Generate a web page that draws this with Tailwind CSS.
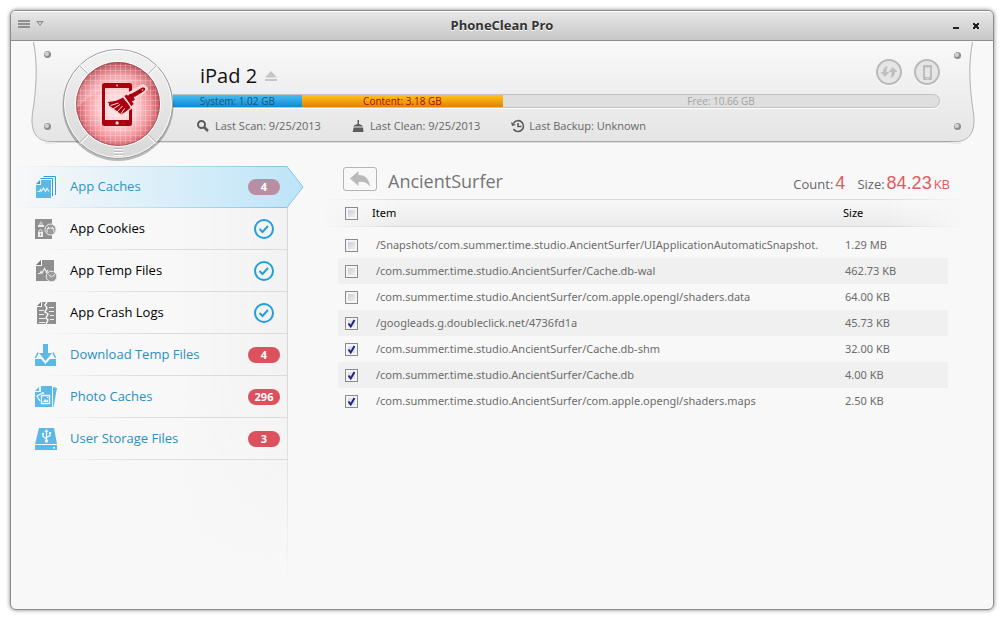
<!DOCTYPE html>
<html lang="en">
<head>
<meta charset="utf-8">
<meta name="viewport" content="width=device-width, initial-scale=1">
<title>PhoneClean Pro</title>
<script src="https://cdn.jsdelivr.net/npm/@tailwindcss/browser@4"></script>
</head>
<body class="flex min-h-screen flex-col bg-white p-2.5 font-['Open_Sans','Noto_Sans',sans-serif] text-xs text-[#666]">
<div class="flex flex-1 flex-col overflow-hidden rounded-md border border-[#8c8c8c] bg-[#f8f8f8] shadow-[0_0_4px_rgba(0,0,0,0.5)]">

  <!-- Title bar -->
  <header class="grid h-[30px] shrink-0 grid-cols-[1fr_auto_1fr] items-center border-b border-[#8f8f8f] bg-linear-to-b from-[#e8e8e8] to-[#c8c8c8] px-1.5 shadow-[inset_0_1px_0_white]">
    <button aria-label="Menu" class="flex items-center gap-1.5 pb-1 pl-px">
      <svg class="h-2 w-3" viewBox="0 0 12 8" fill="#8f8f8f"><path d="M0 0h12v2H0zM0 3h12v2H0zM0 6h12v2H0z"/></svg>
      <svg class="h-[5px] w-2" viewBox="0 0 8 5" fill="#c8c8c8" stroke="#8a8a8a"><path d="M.8.5h6.4L4 4.3z"/></svg>
    </button>
    <h1 class="text-[13px] font-bold text-[#333] [text-shadow:0_1px_0_white]">PhoneClean Pro</h1>
    <div class="flex items-center justify-end gap-3.5 pr-2">
      <button aria-label="Minimize"><svg class="h-1.5 w-1.5" viewBox="0 0 6 6" fill="#222"><path d="M0 4h6v2H0z"/></svg></button>
      <button aria-label="Close"><svg class="h-1.5 w-1.5" viewBox="0 0 6 6" fill="#222"><path d="M0 0h2v1h2V0h2v2H5v2h1v2H4V5H2v1H0V4h1V2H0z"/></svg></button>
    </div>
  </header>

  <!-- Device panel -->
  <section class="relative flex pt-[7px] pr-[53px] pl-[51px]">
    <div class="absolute top-0 right-[18px] left-5 flex h-[103px]">
      <svg class="h-[103px] w-6 shrink-0" viewBox="0 0 24 103">
        <defs><linearGradient id="metal" gradientUnits="userSpaceOnUse" x1="0" y1="0" x2="0" y2="101"><stop offset="0" stop-color="#f9f9f9"/><stop offset="1" stop-color="#e5e5e5"/></linearGradient></defs>
        <path d="M2 0C7 25 4 55 1.500 72C-2 91 6 100.500 19 100.500H24V0z" fill="url(#metal)"/>
        <path d="M2.500 1C7.500 25 4.500 55 1.500 72C-1 91 6 100.500 19 100.500H24" fill="none" stroke="#b0b0ac"/>
        <path d="M14 102h10" stroke="#dedede"/>
        <circle cx="16.500" cy="13.500" r="3.500" fill="#8d8d8d"/><circle cx="15.700" cy="12.700" r="2.300" fill="#d0d0d0"/>
        <circle cx="16.500" cy="85.500" r="3.500" fill="#8d8d8d"/><circle cx="15.700" cy="84.700" r="2.300" fill="#d0d0d0"/>
      </svg>
      <div class="mb-0.5 flex-1 border-b border-[#a9a9a5] bg-linear-to-b from-[#f9f9f9] to-[#e5e5e5] shadow-[0_1px_0_#dedede]"></div>
      <svg class="h-[103px] w-6 shrink-0" viewBox="0 0 24 103">
        <path d="M22 0C17 25 20 55 22.500 72C26 91 18 100.500 5 100.500H0V0z" fill="url(#metal)"/>
        <path d="M21.500 1C16.500 25 19.500 55 22.500 72C25 91 18 100.500 5 100.500H0" fill="none" stroke="#b0b0ac"/>
        <path d="M0 102h10" stroke="#dedede"/>
        <circle cx="6.500" cy="14.500" r="3.500" fill="#8d8d8d"/><circle cx="5.700" cy="13.700" r="2.300" fill="#d0d0d0"/>
        <circle cx="6.500" cy="85.500" r="3.500" fill="#8d8d8d"/><circle cx="5.700" cy="84.700" r="2.300" fill="#d0d0d0"/>
      </svg>
    </div>

    <!-- Dial -->
    <svg class="relative z-10 h-[114px] w-[114px] shrink-0" viewBox="0 0 114 114">
      <defs>
        <linearGradient id="ring" x1="0" y1="0" x2="0" y2="1"><stop offset="0" stop-color="#f2f2f2"/><stop offset="1" stop-color="#d8d8d8"/></linearGradient>
        <radialGradient id="glow" cx=".5" cy=".54" r=".54"><stop offset="0" stop-color="#fff0f0"/><stop offset=".45" stop-color="#fcc8cb"/><stop offset=".7" stop-color="#f2949b"/><stop offset=".9" stop-color="#cc5a64"/><stop offset="1" stop-color="#a83640"/></radialGradient>
        <linearGradient id="gloss" x1="0" y1="0" x2="0" y2="1"><stop offset="0" stop-color="#fff" stop-opacity=".1"/><stop offset="1" stop-color="#fff" stop-opacity=".3"/></linearGradient>
        <pattern id="grid" width="5" height="5" patternUnits="userSpaceOnUse" x="3" y="2"><path d="M0 .5h5M.5 0v5" stroke="#fff" stroke-opacity=".22"/></pattern>
        <clipPath id="lens"><circle cx="56" cy="56" r="42"/></clipPath>
      </defs>
      <circle cx="56" cy="57.500" r="55.500" fill="#000" fill-opacity=".25"/>
      <circle cx="56" cy="56" r="54.500" fill="url(#ring)" stroke="#999"/>
      <circle cx="56" cy="56" r="53.500" fill="none" stroke="#fff" stroke-opacity=".8"/>
      <path d="M17.500 17.500l9 9M94.500 17.500l-9 9M17.500 94.500l9-9M94.500 94.500l-9-9" stroke="#bcbcbc"/>
      <path d="M18.500 16.500l9 9M95.500 18.500l-9 9M18.500 95.500l9-9M93.500 95.500l-9-9" stroke="#fff"/>
      <circle cx="56" cy="56" r="43" fill="#fff"/>
      <circle cx="56" cy="56" r="42" fill="url(#glow)"/>
      <g clip-path="url(#lens)">
        <path d="M14 14h84v26C75 30 40 32 14 62z" fill="url(#gloss)"/>
        <rect x="14" y="14" width="84" height="84" fill="url(#grid)"/>
      </g>
      <circle cx="56" cy="56" r="41.500" fill="none" stroke="#9d4a50" stroke-opacity=".7"/>
      <path fill="#a8000f" fill-rule="evenodd" d="M42.500 35h25q2.500 0 2.500 2.500v38q0 2.500-2.500 2.500h-25q-2.500 0-2.500-2.500v-38q0-2.500 2.500-2.500zM43 40v32h24V40zM54.200 37.500a.9.900 0 1 0 1.800 0a.9.900 0 1 0-1.800 0M53.400 75a1.700 1.700 0 1 0 3.400 0a1.700 1.700 0 1 0-3.400 0"/>
      <!-- Brush -->
      <g fill="#a8000f">
        <path d="M62 48l7.500 11.500q-4.500 4-10.500 7.500l-13-9V53.500Q56 53 62 48z" stroke="#fbd9da" stroke-width="2"/>
        <path d="M60.500 49L71.500 43l9.500-5.500 3.500 3-3.500 4-7.500 4.500-3 7z" stroke="#fbd9da" stroke-width="3" stroke-linejoin="round"/>
        <path d="M61 49.500l7.500 10.500q-5 4-9.500 6.500L45.500 54Q55 53.500 61 49.500z"/>
        <path d="M48.500 57.500l8-2.500M51 61l7-4.500M54.500 64.500l6-6.500M58.500 66.500l4-6" fill="none" stroke="#fbd9da"/>
        <path d="M62.500 48l2.300-1.600 7 9.500-2.500 2zM66.500 47l2.500-1.500 4 6-2.300 1.700zM70.500 46l9.500-6q2.200-1 3 .3t-.8 2.700l-9.500 6z"/>
        <circle cx="80.500" cy="42" r=".8" fill="#fbd9da"/>
      </g>
      <path d="M52 100.500h9M52 103.500h9M52 106.500h9" stroke="#bdbdbd"/><path d="M52 101.500h9M52 104.500h9M52 107.500h9" stroke="#fff"/>
    </svg>

    <div class="relative -ml-[3px] min-w-0 flex-1">
      <div class="flex h-[46px] items-center justify-between pl-[27px]">
        <div class="flex items-center gap-2 pt-2.5">
          <h2 class="text-xl leading-6 text-[#111]">iPad 2</h2>
          <button aria-label="Eject"><svg class="h-2.5 w-3" viewBox="0 0 12 10" fill="#c6c6c6"><path d="M6 0l6 6.500H0zM0 8h12v2H0z"/></svg></button>
        </div>
        <div class="flex gap-3 pt-0.5">
          <button aria-label="Refresh" class="grid size-[26px] place-items-center rounded-full border-2 border-[#b9b9b9] bg-[#e6e6e6] shadow-[0_1px_1px_white]">
            <svg class="h-3.5 w-[18px]" viewBox="0 0 18 14" fill="#c0c0c0"><path d="M8 1.500Q3 1.500 3 7H.5l4.500 5 4.500-5H6.500Q6 4 8 1.500zM10 12.500q5 0 5-5.500h2.500L13 2 8.500 7h3q.5 3-1.500 5.500z"/></svg>
          </button>
          <button aria-label="Device" class="grid size-[26px] place-items-center rounded-full border-2 border-[#b9b9b9] bg-[#e6e6e6] shadow-[0_1px_1px_white]">
            <svg class="h-[15px] w-[9px]" viewBox="0 0 9 15" fill="#bdbdbd" fill-rule="evenodd"><path d="M0 0h9v15H0zM2 2.500v9.500h5V2.500zM3.500 13v1h2v-1z"/></svg>
          </button>
        </div>
      </div>
      <div class="flex h-3.5 overflow-hidden rounded-r-full border border-l-0 border-[#c3c3c3] bg-[#dfdfdf] text-center text-[10px] leading-3 shadow-[0_1px_0_white]">
        <div class="bg-linear-to-b from-[#45bdf2] to-[#0a8bd2] text-[#14587f]" style="width:16.800%">System: 1.02 GB</div>
        <div class="bg-linear-to-b from-[#ffc31c] to-[#e08300] text-[#a80c0c]" style="width:26.300%">Content: 3.18 GB</div>
        <div class="flex-1 text-[#a3a3a3]">Free: 10.66 GB</div>
      </div>
      <div class="flex items-center gap-[31px] pt-2.5 pl-6 text-[11px] leading-4 text-[#666]">
        <span class="flex items-center gap-1.5"><svg class="size-3" viewBox="0 0 12 12" fill="none" stroke="#5c5c5c" stroke-width="2"><circle cx="4.500" cy="4.500" r="3.500"/><path d="M7 7l4 4" stroke-width="2.500"/></svg>Last Scan: 9/25/2013</span>
        <span class="flex items-center gap-1.5"><svg class="size-3" viewBox="0 0 12 12" fill="#5c5c5c"><path d="M5.500 0H7v4q3 .5 4 2.500H1Q2.500 4.500 5.500 4zM1.500 7.500h9.500l.5 4.500H.5q1-2 1-4.500z"/></svg>Last Clean: 9/25/2013</span>
        <span class="flex items-center gap-1"><svg class="size-3.5" viewBox="0 0 14 14" fill="none" stroke="#5c5c5c" stroke-width="1.600"><path d="M2.400 4.300A5.400 5.400 0 1 1 2.500 10"/><path d="M7 4v3.500h3.500"/><path d="M0 3l1 4 4-1z" fill="#5c5c5c" stroke="none"/></svg>Last Backup: Unknown</span>
      </div>
    </div>
  </section>

  <div class="flex flex-1 pt-1">
    <!-- Categories -->
    <nav class="relative w-[277px] shrink-0 text-[13px]">
      <div class="absolute inset-0 bg-linear-to-r from-transparent from-60% to-[#f2f2f2] [mask-image:linear-gradient(to_bottom,black_45%,transparent_90%)]"></div>
      <div class="absolute inset-y-0 right-0 w-px bg-linear-to-b from-[#d8d8d8] from-50% to-transparent to-95%"></div>
      <ul class="relative [&_button]:flex [&_button]:h-[42px] [&_button]:w-full [&_button]:items-center [&_button]:gap-[13px] [&_button]:pr-2 [&_button]:pl-6 [&>li+li]:bg-[linear-gradient(to_right,transparent_10%,#dcdcdc_50%)] [&>li+li]:bg-[length:100%_1px] [&>li+li]:bg-bottom [&>li+li]:bg-no-repeat">
        <li class="relative">
          <svg class="absolute top-0 left-0 h-[42px] w-[293px] overflow-visible" viewBox="0 0 293 42" preserveAspectRatio="none">
            <defs>
              <linearGradient id="sel" x1="0" y1="0" x2="1" y2="0"><stop offset="0" stop-color="#f8f8f8"/><stop offset=".45" stop-color="#dff0f9"/><stop offset="1" stop-color="#bde4f8"/></linearGradient>
              <linearGradient id="selEdge" gradientUnits="userSpaceOnUse" x1="0" y1="0" x2="293" y2="0"><stop offset="0" stop-color="#8ecfea" stop-opacity="0"/><stop offset="1" stop-color="#7fc3e2"/></linearGradient>
            </defs>
            <path d="M0 .5h276l16 20.500-16 20.500H0z" fill="url(#sel)"/><path d="M0 .5h276l16 20.500-16 20.500H0" fill="none" stroke="url(#selEdge)"/>
          </svg>
          <button class="relative text-[#2b96c6]">
            <svg class="size-[22px]" viewBox="0 0 22 22"><path d="M8.500.5h12V19M5.500 2.500h12V20" fill="none" stroke="#3d9ccb"/><path d="M6 4h10v18H1V9h5z" fill="#5cb9e6"/><path d="M1 8l4-4v4z" fill="#3d9ccb"/><path d="M2.500 15.500h2l1-2 1 2M6 16l2.500-4 2 3.500 1.500-3 2 3" stroke="#e6f5fc" fill="none" stroke-width="1.200"/></svg>
            <span class="flex-1 text-left">App Caches</span>
            <span class="h-4 w-8 rounded-full bg-[#b98ea5] text-center text-[11px] leading-4 font-bold text-white">4</span>
          </button>
        </li>
        <li class="text-black">
          <button>
            <svg class="size-[22px]" viewBox="0 0 22 22"><path d="M0 1h17v20H0z" fill="#8f8f8f"/><path d="M3 7h6v2H3zM4 5.500h4v1H4zM5.500 3.500h1V5h-1zM3 14h5v5H3z" fill="#eee"/><path d="M4 14v-1.500q1.500-2 3 0V14" fill="none" stroke="#eee"/><path d="M5 15.500h1v2H5z" fill="#8f8f8f"/><circle cx="15.500" cy="11.500" r="5.500" fill="#999" stroke="#eee"/><path d="M12 14.500c0-3 1-4.500 3.500-4.500s3.500 1.500 3.500 4.500M12 11l2-2M17 9l2 2" fill="none" stroke="#eee"/></svg>
            <span class="flex-1 text-left">App Cookies</span>
            <svg class="mr-1.5 size-5" viewBox="0 0 20 20" fill="none" stroke="#229fdb" stroke-width="2"><circle cx="10" cy="10" r="9"/><path d="M5.500 10l3 3L14 7"/></svg>
          </button>
        </li>
        <li class="text-black">
          <button>
            <svg class="size-[22px]" viewBox="0 0 22 22"><path d="M7 0h12v21H1V6h6z" fill="#8f8f8f"/><path d="M1 5l5-5v5z" fill="#777"/><path d="M3 13.500h2l1-2 1 2M6.500 14l3-5.500 3 5M11 13l2-3" stroke="#eee" fill="none" stroke-width="1.200"/><circle cx="16.500" cy="16.500" r="5.300" fill="#999" stroke="#eee"/><path d="M13.500 14.500l3 2.500 3.500-2.500" fill="none" stroke="#eee"/></svg>
            <span class="flex-1 text-left">App Temp Files</span>
            <svg class="mr-1.5 size-5" viewBox="0 0 20 20" fill="none" stroke="#229fdb" stroke-width="2"><circle cx="10" cy="10" r="9"/><path d="M5.500 10l3 3L14 7"/></svg>
          </button>
        </li>
        <li class="text-black">
          <button>
            <svg class="size-[22px]" viewBox="0 0 22 22"><path d="M7 0h14v22H2V5h5z" fill="#8f8f8f"/><path d="M2 4l4-4v4z" fill="#777"/><path d="M12 0l-2 3 2 3-2 4 3 2-2 4 2 2-2 4" fill="none" stroke="#f8f8f8" stroke-width="1.500"/><path d="M4 8.500h5M14 5.500h5M4 12.500h5M14 9.500h5M4 16.500h6M15 13.500h4M4 20.500h6M15 17.500h4" stroke="#eee"/></svg>
            <span class="flex-1 text-left">App Crash Logs</span>
            <svg class="mr-1.5 size-5" viewBox="0 0 20 20" fill="none" stroke="#229fdb" stroke-width="2"><circle cx="10" cy="10" r="9"/><path d="M5.500 10l3 3L14 7"/></svg>
          </button>
        </li>
        <li class="text-[#2b8fbe]">
          <button>
            <svg class="size-[22px]" viewBox="0 0 22 22" fill="#5cb9e6"><path d="M8 0h5v9h4l-6.500 8L4 9h4zM0 15h6l4.500 5 4.500-5h6v7H0z"/><path d="M.5 14L3 8.500M20.500 14L18 8.500" stroke="#5cb9e6" stroke-width="1.500"/></svg>
            <span class="flex-1 text-left">Download Temp Files</span>
            <span class="h-4 w-8 rounded-full bg-[#db515d] text-center text-[11px] leading-4 font-bold text-white">4</span>
          </button>
        </li>
        <li class="text-[#2b8fbe]">
          <button>
            <svg class="size-[22px]" viewBox="0 0 22 22" fill="#5cb9e6"><path d="M6 0h11v21H0V6h6zM0 5l4-4v4zM18 1l4 1-3.500 19H18z"/><path d="M6.500 9.500h8v8h-8zM5 15l-3-5 6-3.500 1 1.500" fill="none" stroke="#f0f8fc" stroke-width="1.300"/><path d="M8 16l2-3 1.500 1.500L13 13.500V16z" fill="#f0f8fc"/><circle cx="12.500" cy="11.500" r=".8" fill="#f0f8fc"/></svg>
            <span class="flex-1 text-left">Photo Caches</span>
            <span class="h-4 w-8 rounded-full bg-[#db515d] text-center text-[11px] leading-4 font-bold text-white">296</span>
          </button>
        </li>
        <li class="text-[#2b8fbe]">
          <button>
            <svg class="size-[22px]" viewBox="0 0 22 22" fill="#5cb9e6"><path d="M4 0h15l3 16H0zM0 17h22v5H0z"/><path d="M11.500 3v11M11.500 11L8 8.500V6M11.500 9.500L15 7.500V5" fill="none" stroke="#f0f8fc" stroke-width="1.300"/><path d="M11.500 1l2 3h-4z" fill="#f0f8fc"/><circle cx="11.500" cy="13" r="1.700" fill="#f0f8fc"/><circle cx="8" cy="6" r="1.200" fill="#f0f8fc"/><path d="M14 4h2v2h-2zM18 19h2v1.500h-2z" fill="#f0f8fc"/></svg>
            <span class="flex-1 text-left">User Storage Files</span>
            <span class="h-4 w-8 rounded-full bg-[#db515d] text-center text-[11px] leading-4 font-bold text-white">3</span>
          </button>
        </li>
      </ul>
    </nav>

    <main class="min-w-0 flex-1 pr-[45px] pl-[50px]">
      <div class="flex h-[33px] items-center pl-[5px]">
        <button aria-label="Back" class="mb-2 grid h-6 w-[34px] place-items-center rounded-[3px] border border-[#b5b5b5]">
          <svg class="h-4 w-5" viewBox="0 0 20 16" fill="#b9b9b9"><path d="M8.500 0v4Q19 4 20 16q-3.500-6-11.500-5v4L0 7.500z"/></svg>
        </button>
        <h2 class="mb-1 ml-[11px] flex-1 text-lg leading-6 text-[#757575]">AncientSurfer</h2>
        <p class="-mr-0.5 flex items-baseline gap-3 pt-0.5 text-[13px] leading-6">
          <span class="flex items-baseline gap-0.5">Count:<span class="font-['Liberation_Sans',sans-serif] text-lg leading-6 text-[#e05a5f]">4</span></span>
          <span class="flex items-baseline gap-0.5">Size:<span class="font-['Liberation_Sans',sans-serif] text-lg leading-6 text-[#e05a5f]">84.23</span><span class="text-[#e05a5f]">KB</span></span>
        </p>
      </div>
      <table class="relative isolate w-full table-fixed text-left font-['Noto_Sans','Open_Sans',sans-serif] text-[11px] text-[#6c6c6c] [&_td]:p-0 [&_th]:p-0 [&_td]:h-[26px] [&_td:nth-child(2)]:pr-2.5 [&_td:nth-child(2)]:pl-1 [&_td:nth-child(3)]:pl-0.5 [&_label]:block [&_label]:overflow-hidden [&_label]:whitespace-nowrap [&_input]:appearance-none [&_input]:ml-[7px] [&_input]:block [&_input]:size-[13px] [&_input]:border [&_input]:border-[#8a8b8b] [&_input]:bg-linear-to-br [&_input]:from-[#c4c8d0] [&_input]:to-[#f6f6f6] [&_input]:shadow-[inset_0_0_0_2px_#f4f4f4] [&_input:checked]:bg-none [&_input:checked]:bg-[#dfe2ea]">
        <colgroup><col class="w-[34px]"><col><col class="w-[105px]"></colgroup>
        <thead class="text-black">
          <tr class="relative h-7">
            <th scope="col"><span class="absolute inset-y-0 -right-4 -left-4 -z-10 border-y border-[#dadada] bg-linear-to-b from-[#f8f8f8] to-[#ebebeb] [mask-image:linear-gradient(to_right,transparent,black_12%,black_88%,transparent)]"></span><input type="checkbox" aria-label="Select all items"></th>
            <th scope="col" class="font-normal">Item</th>
            <th scope="col" class="font-normal">Size</th>
          </tr>
        </thead>
        <tbody class="before:block before:h-[5px] [&>tr:nth-child(even)]:bg-[#f0f0f0]">
          <tr><td><input type="checkbox" id="f1"></td><td><label for="f1">/Snapshots/com.summer.time.studio.AncientSurfer/UIApplicationAutomaticSnapshot.</label></td><td>1.29 MB</td></tr>
          <tr><td><input type="checkbox" id="f2"></td><td><label for="f2">/com.summer.time.studio.AncientSurfer/Cache.db-wal</label></td><td>462.73 KB</td></tr>
          <tr><td><input type="checkbox" id="f3"></td><td><label for="f3">/com.summer.time.studio.AncientSurfer/com.apple.opengl/shaders.data</label></td><td>64.00 KB</td></tr>
          <tr><td><div class="grid justify-start *:[grid-area:1/1]"><input type="checkbox" id="f4" checked><svg class="pointer-events-none ml-[7px] size-[13px]" viewBox="0 0 13 13" fill="none" stroke="#24247e" stroke-width="2"><path d="M3.500 6.500l2.200 3L9.500 3"/></svg></div></td><td><label for="f4">/googleads.g.doubleclick.net/4736fd1a</label></td><td>45.73 KB</td></tr>
          <tr><td><div class="grid justify-start *:[grid-area:1/1]"><input type="checkbox" id="f5" checked><svg class="pointer-events-none ml-[7px] size-[13px]" viewBox="0 0 13 13" fill="none" stroke="#24247e" stroke-width="2"><path d="M3.500 6.500l2.200 3L9.500 3"/></svg></div></td><td><label for="f5">/com.summer.time.studio.AncientSurfer/Cache.db-shm</label></td><td>32.00 KB</td></tr>
          <tr><td><div class="grid justify-start *:[grid-area:1/1]"><input type="checkbox" id="f6" checked><svg class="pointer-events-none ml-[7px] size-[13px]" viewBox="0 0 13 13" fill="none" stroke="#24247e" stroke-width="2"><path d="M3.500 6.500l2.200 3L9.500 3"/></svg></div></td><td><label for="f6">/com.summer.time.studio.AncientSurfer/Cache.db</label></td><td>4.00 KB</td></tr>
          <tr><td><div class="grid justify-start *:[grid-area:1/1]"><input type="checkbox" id="f7" checked><svg class="pointer-events-none ml-[7px] size-[13px]" viewBox="0 0 13 13" fill="none" stroke="#24247e" stroke-width="2"><path d="M3.500 6.500l2.200 3L9.500 3"/></svg></div></td><td><label for="f7">/com.summer.time.studio.AncientSurfer/com.apple.opengl/shaders.maps</label></td><td>2.50 KB</td></tr>
        </tbody>
      </table>
    </main>
  </div>
</div>
</body>
</html>
